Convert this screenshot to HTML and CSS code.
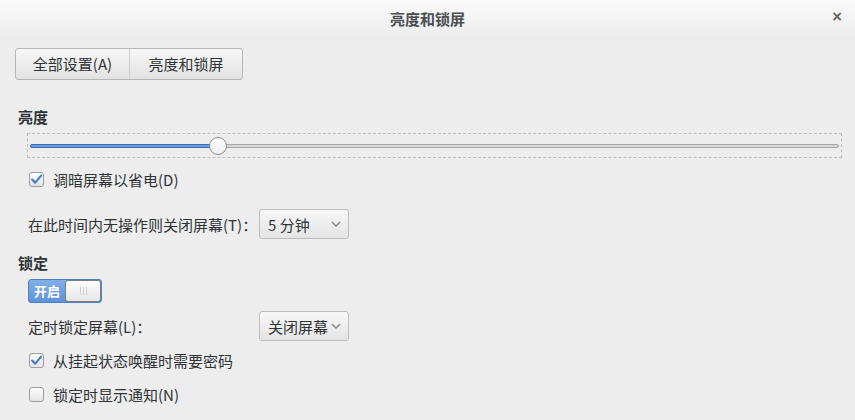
FILE: index.html
```html
<!DOCTYPE html>
<html lang="zh-CN">
<head>
<meta charset="utf-8">
<title>亮度和锁屏</title>
<link rel="stylesheet" href="styles.css">
</head>
<body>
<div class="window">
  <header class="titlebar">
    <span class="title">亮度和锁屏</span>
    <span class="close">×</span>
  </header>
  <main class="content">
    <div class="crumbs">
      <button class="crumb">全部设置(A)</button>
      <button class="crumb">亮度和锁屏</button>
    </div>

    <h2 class="heading h-bright">亮度</h2>
    <div class="slider-box">
      <div class="track">
        <div class="fill" style="width: 187px"></div>
        <div class="thumb" style="left: 187px"></div>
      </div>
    </div>
    <label class="check-row r-dim">
      <span class="box checked"><svg viewBox="0 0 15 15" width="15" height="15"><path d="M3.2 7.6 L6.2 10.6 L12.2 3.6" fill="none" stroke="#4a7fc4" stroke-width="2.2" stroke-linecap="round" stroke-linejoin="round"/></svg></span>
      <span>调暗屏幕以省电(D)</span>
    </label>

    <div class="field-row r-timeout">
      <span class="field-label">在此时间内无操作则关闭屏幕(T)：</span>
      <div class="combo"><span>5 分钟</span><svg class="chev" viewBox="0 0 10 6" width="10" height="6"><path d="M1 1 L5 5 L9 1" fill="none" stroke="#8a8a8a" stroke-width="1.5"/></svg></div>
    </div>

    <h2 class="heading h-lock">锁定</h2>
    <div class="switch">
      <span class="switch-on">开启</span>
      <span class="knob"><i></i><i></i><i></i></span>
    </div>

    <div class="field-row r-locktime">
      <span class="field-label">定时锁定屏幕(L)：</span>
      <div class="combo"><span>关闭屏幕</span><svg class="chev" viewBox="0 0 10 6" width="10" height="6"><path d="M1 1 L5 5 L9 1" fill="none" stroke="#8a8a8a" stroke-width="1.5"/></svg></div>
    </div>

    <label class="check-row r-pass">
      <span class="box checked"><svg viewBox="0 0 15 15" width="15" height="15"><path d="M3.2 7.6 L6.2 10.6 L12.2 3.6" fill="none" stroke="#4a7fc4" stroke-width="2.2" stroke-linecap="round" stroke-linejoin="round"/></svg></span>
      <span>从挂起状态唤醒时需要密码</span>
    </label>
    <label class="check-row r-notify">
      <span class="box"></span>
      <span>锁定时显示通知(N)</span>
    </label>
  </main>
</div>
</body>
</html>
```

FILE: styles.css
```css
* { box-sizing: border-box; }
html, body {
  margin: 0;
  padding: 0;
  background: #ededed;
}
body {
  font-family: "Noto Sans CJK SC", "Noto Sans", sans-serif;
  font-size: 15px;
  color: #2e3436;
  width: 855px;
  height: 420px;
  overflow: hidden;
}
.titlebar {
  height: 38px;
  background: linear-gradient(#fbfbfb, #ececec);
  display: flex;
  align-items: center;
  justify-content: center;
  position: relative;
}
.title {
  font-weight: bold;
  font-size: 15px;
  color: #4a4f52;
  margin-top: -2px;
}
.close {
  position: absolute;
  right: 12px;
  top: 8px;
  font-size: 14px;
  font-weight: bold;
  color: #5a6266;
  font-family: "DejaVu Sans", sans-serif;
}
.content {
  padding: 10px 0 0 15px;
}
.crumbs {
  display: inline-flex;
  height: 32px;
  border: 1px solid #b6b6b6;
  border-radius: 3px;
  background: linear-gradient(#f7f7f7, #e2e2e2);
  overflow: hidden;
}
.crumb {
  font: inherit;
  color: #2e3436;
  border: none;
  background: transparent;
  padding: 0;
  height: 30px;
  line-height: 30px;
}
.crumb:first-child {
  width: 114px;
  border-right: 1px solid #cfcfcf;
}
.crumb:last-child {
  width: 112px;
}
.heading {
  font-size: 15px;
  font-weight: bold;
  margin: 0 0 0 3px;
  line-height: 20px;
  color: #2e3436;
}
.h-bright { margin-top: 27px; }
.slider-box {
  margin: 6px 0 0 12px;
  width: 815px;
  height: 25px;
  border: 1px dashed #bdbdbd;
  position: relative;
}
.track {
  position: absolute;
  left: 2px;
  right: 2px;
  top: 10px;
  height: 4px;
  border-radius: 2px;
  background: #d8d8d8;
  border: 1px solid #a7a7a7;
}
.fill {
  position: absolute;
  left: -1px;
  top: -1px;
  height: 4px;
  border-radius: 2px;
  background: #6b9ad8;
  border: 1px solid #3e6db1;
}
.thumb {
  position: absolute;
  top: -8px;
  width: 18px;
  height: 18px;
  margin-left: -9px;
  border-radius: 50%;
  border: 1px solid #8e8e8e;
  background: linear-gradient(#ffffff, #ececec);
}
.check-row {
  display: flex;
  align-items: center;
  height: 20px;
  margin-left: 14px;
}
.box {
  width: 15px;
  height: 15px;
  border: 1px solid #9c9c9c;
  border-radius: 3px;
  background: linear-gradient(#fdfdfd, #e4e4e4);
  margin-right: 9px;
  position: relative;
  flex: none;
}
.box svg {
  position: absolute;
  left: -1px;
  top: -1px;
}
.r-dim { margin-top: 11px; }
.field-row {
  display: flex;
  align-items: center;
  margin-left: 13px;
  height: 30px;
}
.field-label {
  width: 231px;
  flex: none;
  white-space: nowrap;
}
.combo {
  width: 90px;
  height: 30px;
  border: 1px solid #bcbcbc;
  border-radius: 3px;
  background: linear-gradient(#f7f7f7, #e4e4e4);
  display: flex;
  align-items: center;
  justify-content: space-between;
  padding: 0 7px 0 8px;
}
.chev { flex: none; }
.r-timeout { margin-top: 20px; }
.h-lock { margin-top: 14px; }
.switch {
  margin: 6px 0 0 13px;
  width: 74px;
  height: 24px;
  border: 1px solid #4c7fc3;
  border-radius: 3px;
  background: linear-gradient(#83afe8, #5e92d8);
  display: flex;
  align-items: stretch;
}
.switch-on {
  width: 36px;
  color: #ffffff;
  font-size: 13px;
  font-weight: bold;
  line-height: 22px;
  text-align: center;
}
.knob {
  flex: 1;
  background: linear-gradient(#fdfdfd, #e6e6e6);
  border: 1px solid #7d7d7d;
  border-radius: 3px;
  display: flex;
  align-items: center;
  justify-content: center;
  gap: 2px;
}
.knob i {
  display: block;
  width: 1px;
  height: 8px;
  background: #cfcfcf;
}
.r-locktime { margin-top: 8px; }
.r-pass { margin-top: 9px; }
.r-notify { margin-top: 14px; }
```
